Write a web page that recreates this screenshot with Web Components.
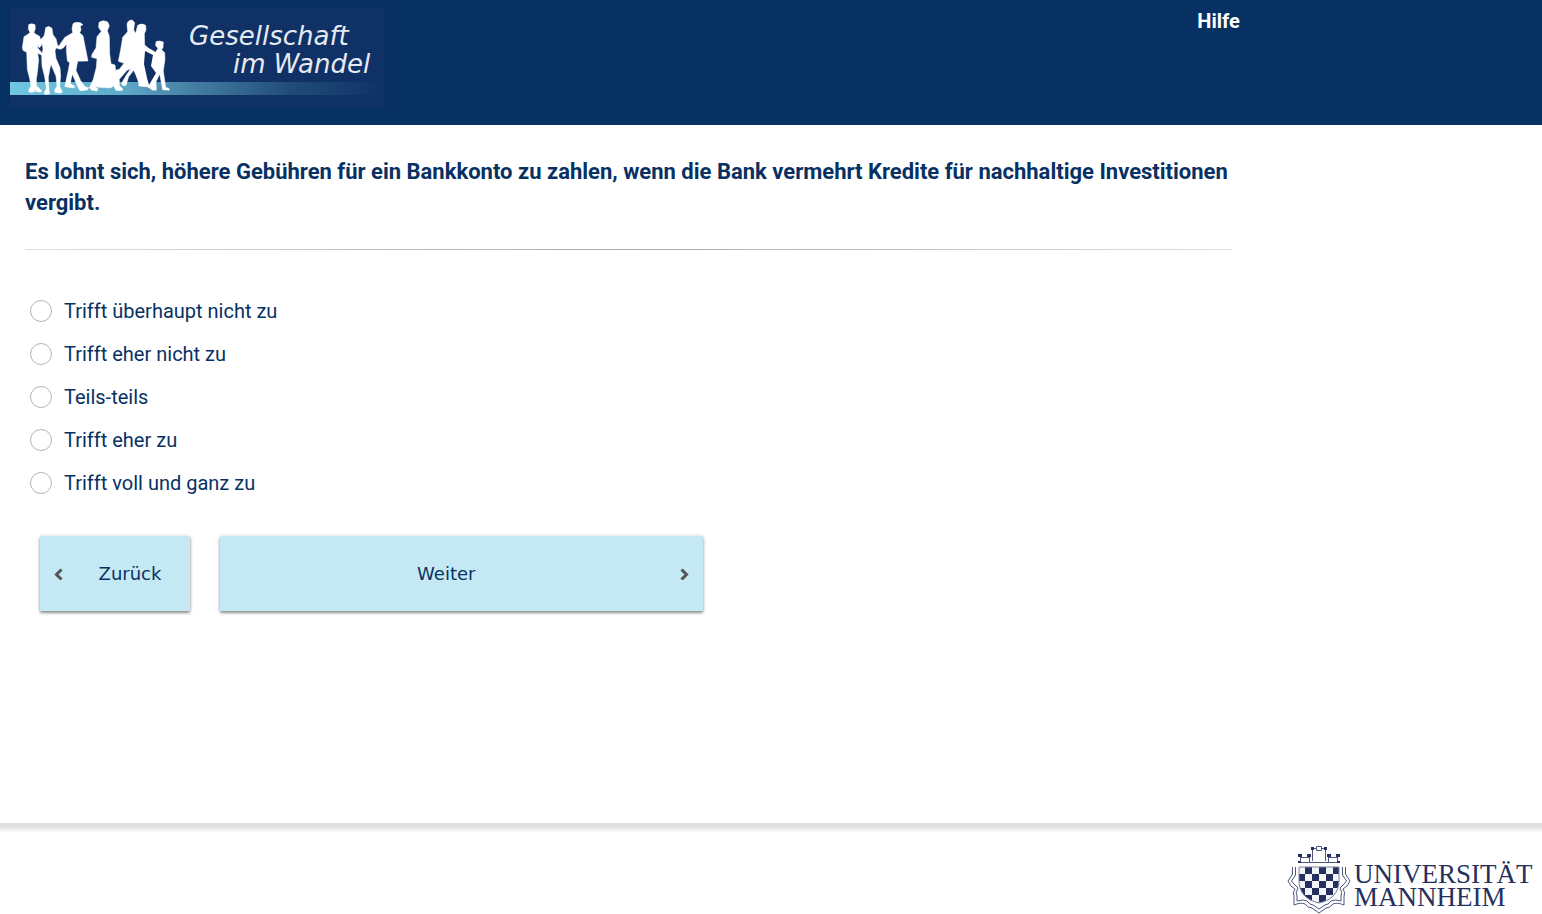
<!DOCTYPE html>
<html lang="de">
<head>
<meta charset="utf-8">
<title>Gesellschaft im Wandel</title>
<style>
  body { margin: 0; background: #fff; color: #083163; font-family: Roboto, sans-serif; }
</style>
</head>
<body>
<survey-page>
  <site-header slot="header">
    <wandel-logo></wandel-logo>
    <help-link>Hilfe</help-link>
  </site-header>
  <survey-question slot="main">
    <span slot="title">Es lohnt sich, höhere Gebühren für ein Bankkonto zu zahlen, wenn die Bank vermehrt Kredite für nachhaltige Investitionen vergibt.</span>
    <answer-list></answer-list>
  </survey-question>
  <survey-nav slot="main"></survey-nav>
  <site-footer slot="footer"><uni-logo></uni-logo></site-footer>
</survey-page>
<script>
const define = (name, html, setup) => customElements.define(name, class extends HTMLElement {
  constructor() {
    super();
    this.attachShadow({ mode: 'open' }).innerHTML = html;
    if (setup) setup(this.shadowRoot);
  }
});

define('survey-page', `
<style>
  :host { display: flex; flex-direction: column; min-height: 100vh; }
  main { flex: 1; box-sizing: border-box; width: 80%; padding: 31px 2px 40px 25px; }
</style>
<slot name="header"></slot>
<main><slot name="main"></slot></main>
<slot name="footer"></slot>`);

define('site-header', `
<style>
  :host { display: block; background: #083163; }
  header { display: flex; justify-content: space-between; align-items: flex-start;
    padding: 7px 19.6% 18px 10px; }
</style>
<header><slot></slot></header>`);

define('help-link', `
<style>
  :host { display: block; }
  a { display: block; color: #fff; text-decoration: none; font-weight: 700; font-size: 20px; line-height: 28px; }
</style>
<a href="#hilfe"><slot></slot></a>`);

define('wandel-logo', `
<style>
  :host { display: block; }
  svg { display: block; width: 375px; height: 100px; }
  text { font: italic 26px "DejaVu Sans", sans-serif; fill: #e6eaf2; }
</style>
<svg viewBox="10 7 375 100" role="img" aria-label="Gesellschaft im Wandel">
  <defs>
    <linearGradient id="bar"><stop offset="0" stop-color="#70c8e0"/><stop offset=".3" stop-color="#5fa9c8"/><stop offset=".48" stop-color="#4680a4"/><stop offset=".75" stop-color="#204c78"/><stop offset="1" stop-color="#0f3165"/></linearGradient>
  </defs>
  <rect x="10" y="7" width="375" height="100" fill="#0f3165"/>
  <rect x="10" y="82" width="375" height="13" fill="url(#bar)"/>
  <g transform="scale(.33333)" fill="#fff" stroke="#fff" stroke-width="1.500" stroke-linejoin="round">
    <path d="M86 74Q95 69 105 74L106 86L102 97L106 102L119 109L122 121L112 133L114 145L128 161L126 166L113 160L116 180L113 211L109 239L109 257L125 272L121 277L109 275L103 267L104 276L88 277L86 272L93 258L89 236L82 208L81 181L80 157L69 151L67 143L72 110L85 102L90 97L85 88Z"/>
    <path d="M137 83Q147 75 156 85L159 104L168 116L173 137L184 138L199 116L208 118L191 143L181 148L168 144L165 153L168 175L180 203L182 229L179 259L187 276L181 280L164 277L164 270L171 258L168 229L153 193L149 209L145 233L147 270L149 281L137 284L132 279L139 265L134 230L126 199L125 169L129 148L127 132L119 143L114 139L111 130L132 108L135 96Z"/>
    <path d="M219 71Q226 65 241 68L249 74L241 78L243 90L239 98L249 107L264 183L233 184L228 211L242 242L255 260L266 263L262 270L240 272L237 268L229 251L217 222L213 240L211 251L226 260L219 264L195 260L196 252L205 211L209 188L202 183L199 150L200 133L187 142L178 136L195 112L218 98L216 86Z"/>
    <path d="M297 67Q309 58 323 66L328 77L322 92L328 109L329 161L333 191L345 195L347 211L358 208L372 190L355 184L362 149L368 112L383 95L381 73Q383 60 397 60L404 68L401 90L407 100L413 76Q425 68 437 76L438 90L433 101L434 135L446 145L467 157L474 145L467 137L468 125Q478 120 490 126L489 143L485 149L494 158L495 178L490 213L497 262L508 266L507 271L488 269L479 222L468 246L469 270L459 271L450 265L441 260L416 258L417 252L410 230L401 211L386 230L378 256L369 257L364 251L379 225L392 207L381 211L358 238L358 256L369 268L364 272L348 271L341 258L331 264L298 262L284 259L294 266L291 273L274 270L268 263L280 238L289 202L291 176L275 172L276 163L288 144L291 110L304 94L296 83Z"/>
    <path d="M428 151L434 190L440 230L444 258L428 258L410 230L408 190Z"/>
  </g>
  <path d="M145 51L153 55L151 66L156 73L149 85L147 78L144 64Z" fill="#0f3165"/>
  <text x="189" y="45">Gesellschaft</text>
  <text x="233" y="73">im Wandel</text>
</svg>`);

define('survey-question', `
<style>
  :host { display: block; }
  h1 { margin: 0 0 31px; font-size: 22px; line-height: 31px; font-weight: 700; }
  hr { height: 1px; border: 0; margin: 0 0 39px; background: linear-gradient(90deg, #e0e0e0, #aaa 50%, #e0e0e0); }
  fieldset { margin: 0; padding: 0; border: 0; min-width: 0; }
</style>
<h1 id="q"><slot name="title"></slot></h1>
<hr>
<fieldset aria-labelledby="q"><slot></slot></fieldset>`);

define('answer-list', `
<style>
  :host { display: block; }
  label { display: flex; align-items: center; gap: 12px; height: 43px; padding-left: 5px; font-size: 20px; width: max-content; }
  input { appearance: none; box-sizing: border-box; width: 22px; height: 22px; margin: 0; border: 1px solid #b5b5b5; border-radius: 50%; background: #fff; }
  input:checked { background: radial-gradient(#083163 45%, #fff 50%); }
</style>`, root => {
  ['Trifft überhaupt nicht zu', 'Trifft eher nicht zu', 'Teils-teils', 'Trifft eher zu', 'Trifft voll und ganz zu']
    .forEach((text, i) => {
      const label = document.createElement('label');
      label.htmlFor = 'a' + i;
      label.innerHTML = `<input type="radio" name="answer" id="a${i}" value="${i + 1}"><span>${text}</span>`;
      root.append(label);
    });
});

define('survey-nav', `
<style>
  :host { display: flex; gap: 30px; margin: 32px 0 0 15px; }
  button { box-sizing: border-box; display: flex; align-items: center; height: 75px; padding: 0 14px; border: 0; border-radius: 1px;
    background: #c5e9f4; color: #083163; font: 18px "DejaVu Sans", sans-serif;
    box-shadow: 0 2px 3px rgba(0,0,0,.4), 0 0 4px rgba(0,0,0,.15); }
  span { flex: 1; text-align: center; }
  svg { width: 9px; height: 12px; fill: none; stroke: #555; stroke-width: 3; }
  .back { width: 150px; }
  .back span { padding-left: 21px; }
  .next { width: 40.5%; }
  .next span { padding-right: 21px; }
</style>
<button class="back" type="button"><svg viewBox="0 0 9 12"><path d="M7.5 1.5L2.5 6.5L7.5 11.5"/></svg><span>Zurück</span></button>
<button class="next" type="button"><span>Weiter</span><svg viewBox="0 0 9 12"><path d="M1.5 1.5L6.5 6.5L1.5 11.5"/></svg></button>`);

define('site-footer', `
<style>
  :host { display: block; }
  footer { display: flex; justify-content: flex-end; padding: 21px 8px 0 0;
    background: linear-gradient(#e0e0e0 0 3px, #e8e8e8 5px, #fff 10px); }
</style>
<footer><slot></slot></footer>`);

define('uni-logo', `
<style>
  :host { display: block; }
  svg { display: block; width: 248px; height: 70px; }
  text { font: 27px "Liberation Serif", serif; fill: #25305e; }
</style>
<svg viewBox="1286 844 248 70" role="img" aria-label="Universität Mannheim">
  <defs>
    <pattern id="check" x="1298" y="867" width="14" height="14" patternUnits="userSpaceOnUse">
      <rect width="14" height="14" fill="#f3f4f8"/>
      <path d="M7 0h7v7h-7zM0 7h7v7h-7z" fill="#25305e"/>
    </pattern>
  </defs>
  <path d="M1299 867H1339V880C1339 893 1332 900 1319 903C1306 900 1299 893 1299 880Z" fill="url(#check)" stroke="#7a82a4"/>
  <g fill="none" stroke="#4c567f">
    <path d="M1299 862.5H1339M1300.500 862V855M1309.500 862V855M1328.500 862V855M1337.500 862V855M1300 857.500H1310M1328 857.500H1338M1312.500 861V848.500H1316.500M1321.500 848.500H1325.500V861M1316.500 846.500H1321.500V850.500H1316.500Z"/>
    <path d="M1292.500 867V874L1288 881L1291 886L1295 889Q1292 893 1294 896L1294 905Q1301 902 1305 904Q1308 908 1312 908L1319 913L1326 908Q1330 908 1333 904Q1337 902 1344 905L1344 896Q1346 893 1343 889L1347 886L1350 881L1345.500 874V867"/>
    <path d="M1295.500 867V875L1291.500 881L1294 884L1298 888Q1295 893 1297 896L1297 901Q1303 899 1307 901Q1310 905 1313 905L1319 909L1325 905Q1328 905 1331 901Q1335 899 1341 901L1341 896Q1343 893 1340 888L1344 884L1346.500 881L1342.500 875V867"/>
  </g>
  <path fill="#25305e" d="M1298 854h4v3h-4zM1307 854h4v3h-4zM1327 854h4v3h-4zM1336 854h4v3h-4zM1298 861h3v2h-3zM1337 861h3v2h-3zM1311 847h3v3h-3zM1324 847h3v3h-3z"/>
  <text x="1354" y="883">UNIVERSITÄT</text>
  <text x="1354" y="906">MANNHEIM</text>
</svg>`);
</script>
</body>
</html>
